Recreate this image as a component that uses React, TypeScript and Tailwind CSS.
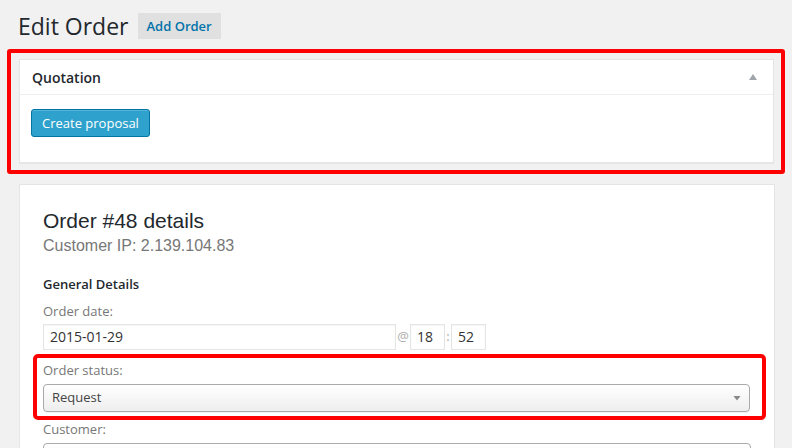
const openSans = { fontFamily: '"Open Sans", "Liberation Sans", sans-serif' };
const arial = { fontFamily: '"Liberation Sans", Arial, sans-serif' };

const TimeBox = ({ value }: { value: string }) => (
  <div className="h-[26px] w-[35px] border border-[#e5e5e5] bg-white px-[6px] text-[14px] leading-[24px] text-[#333] shadow-[inset_0_1px_2px_rgba(0,0,0,0.04)]">
    {value}
  </div>
);

const App = () => {
  return (
    <div
      className="h-[448px] w-[792px] overflow-hidden bg-[#f1f1f1]"
      style={openSans}
    >
      {/* title */}
      <div className="flex items-center pl-[18px] pt-[11px]">
        <h1 className="text-[23px] leading-[30px] font-normal text-[#23282d]">
          Edit Order
        </h1>
        <span className="ml-[9px] h-[26px] bg-[#e0e0e0] px-[9px] text-[13px] leading-[26px] font-semibold text-[#0073aa]">
          Add Order
        </span>
      </div>

      {/* quotation box, marked in red */}
      <div className="ml-[7px] mt-[8px] w-[778px] rounded-[3px] border-4 border-[#ff0000] pt-[6px] pr-[7px] pb-[7px] pl-[8px]">
        <div className="w-[755px] border border-[#e5e5e5] bg-white shadow-[0_1px_1px_rgba(0,0,0,0.04)]">
          <div className="flex h-[35px] items-center justify-between border-b border-[#eee] px-[12px]">
            <span className="text-[14px] font-semibold text-[#23282d]">
              Quotation
            </span>
            <svg width="10" height="8" viewBox="0 0 10 8" className="mr-[3px]">
              <path d="M1 7 L5 1 L9 7 Z" fill="#a0a5aa" />
            </svg>
          </div>
          <div className="px-[11px] pt-[14px] pb-[25px]">
            <button className="h-[28px] rounded-[3px] border border-[#0074a2] bg-[#2ea2cc] px-[10px] text-[13px] leading-[26px] text-white shadow-[inset_0_1px_0_rgba(120,200,230,0.5)]">
              Create proposal
            </button>
          </div>
        </div>
      </div>

      {/* order details */}
      <div className="ml-[19px] mt-[10px] w-[756px] border border-[#e5e5e5] bg-white px-[23px] pt-[23px] pb-[20px]">
        <h2 className="text-[21px] leading-[26px] text-[#23282d]" style={arial}>
          Order #48 details
        </h2>
        <p className="mt-[1px] text-[16px] leading-[22px] text-[#777]" style={arial}>
          Customer IP: 2.139.104.83
        </p>

        <h4 className="mt-[18px] text-[13px] leading-[18px] font-semibold text-[#23282d]">
          General Details
        </h4>

        <p className="mt-[9px] text-[13px] leading-[18px] text-[#777]">
          Order date:
        </p>
        <div className="mt-[4px] flex items-center">
          <div className="h-[26px] w-[353px] border border-[#e5e5e5] bg-white px-[6px] text-[14px] leading-[24px] text-[#333] shadow-[inset_0_1px_2px_rgba(0,0,0,0.04)]">
            2015-01-29
          </div>
          <span className="w-[14px] text-center text-[13px] text-[#aaa]">@</span>
          <TimeBox value="18" />
          <span className="w-[6px] text-center text-[13px] text-[#aaa]">:</span>
          <TimeBox value="52" />
        </div>

        {/* order status, marked in red */}
        <div className="-ml-[10px] mt-[4px] w-[733px] rounded-[5px] border-4 border-[#ff0000] pt-[3px] pr-[12px] pb-[4px] pl-[6px]">
          <p className="text-[13px] leading-[18px] text-[#777]">Order status:</p>
          <div className="mt-[5px] flex h-[28px] items-center justify-between rounded-[4px] border border-[#aaa] bg-gradient-to-b from-white to-[#eee] pl-[8px] pr-[8px] shadow-[0_1px_0_rgba(0,0,0,0.05)]">
            <span className="text-[13px] text-[#444]">Request</span>
            <svg width="8" height="6" viewBox="0 0 8 6">
              <path d="M0.5 1 L7.5 1 L4 5.5 Z" fill="#888" />
            </svg>
          </div>
        </div>

        <p className="text-[13px] leading-[18px] text-[#777]">Customer:</p>
        <div className="mt-[5px] h-[28px] rounded-[4px] border border-[#aaa] bg-gradient-to-b from-white to-[#eee]" />
      </div>
    </div>
  );
};

export default App;
